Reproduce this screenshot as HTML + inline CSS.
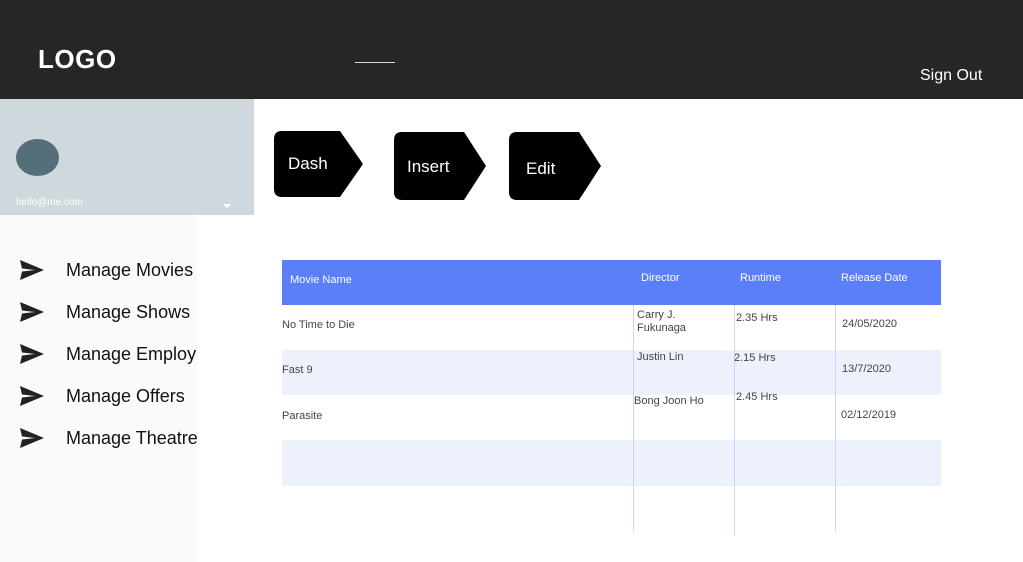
<!DOCTYPE html>
<html><head><meta charset="utf-8"><style>
*{margin:0;padding:0;box-sizing:border-box}
body{width:1023px;height:562px;position:relative;overflow:hidden;background:#fff;font-family:"Liberation Sans",sans-serif}
.a{position:absolute;white-space:nowrap}
.menu{font-size:18px;color:#111;left:66px}
.ic{left:20px;width:24px;height:20px}
.td{font-size:11px;color:#444}
.th{font-size:11px;color:#fff}
</style></head><body>
<div class="a" style="left:0;top:0;width:1023px;height:99px;background:#262626"></div>
<div class="a" style="left:38px;top:44px;font-size:26px;font-weight:bold;color:#fff;letter-spacing:0.5px">LOGO</div>
<div class="a" style="left:355px;top:62px;width:40px;height:1px;background:#ddd"></div>
<div class="a" style="left:920px;top:67px;font-size:16px;color:#fff">Sign Out</div>

<div class="a" style="left:0;top:99px;width:254px;height:116px;background:#cfd8dc"></div>
<div class="a" style="left:0;top:215px;width:197px;height:347px;background:#fafafa"></div>
<div class="a" style="left:16px;top:139px;width:43px;height:37px;border-radius:50%;background:#546e7a"></div>
<div class="a" style="left:16px;top:197px;font-size:10px;color:#fff">hello@me.com</div>
<div class="a" style="left:223px;top:204px;width:0;height:0;border-left:4px solid transparent;border-right:4px solid transparent;border-top:4px solid #fff"></div>

<svg class="a ic" style="top:260px" viewBox="0 0 24 20"><path d="M0 0L24 10L0 20L2 11.5L15 10L2 8.5Z" fill="#222"/></svg>
<div class="a menu" style="top:260px">Manage Movies</div>
<svg class="a ic" style="top:302px" viewBox="0 0 24 20"><path d="M0 0L24 10L0 20L2 11.5L15 10L2 8.5Z" fill="#222"/></svg>
<div class="a menu" style="top:302px">Manage Shows</div>
<svg class="a ic" style="top:344px" viewBox="0 0 24 20"><path d="M0 0L24 10L0 20L2 11.5L15 10L2 8.5Z" fill="#222"/></svg>
<div class="a menu" style="top:344px;width:131px;overflow:hidden">Manage Employees</div>
<svg class="a ic" style="top:386px" viewBox="0 0 24 20"><path d="M0 0L24 10L0 20L2 11.5L15 10L2 8.5Z" fill="#222"/></svg>
<div class="a menu" style="top:386px">Manage Offers</div>
<svg class="a ic" style="top:428px" viewBox="0 0 24 20"><path d="M0 0L24 10L0 20L2 11.5L15 10L2 8.5Z" fill="#222"/></svg>
<div class="a menu" style="top:428px;width:131px;overflow:hidden">Manage Theatres</div>

<svg class="a" style="left:274px;top:131px" width="90" height="67" viewBox="0 0 90 67"><path d="M8 0H66L89 33L66 66H8Q0 66 0 58V8Q0 0 8 0Z" fill="#000"/></svg>
<div class="a" style="left:288px;top:154px;font-size:17px;color:#fff">Dash</div>
<svg class="a" style="left:394px;top:132px" width="93" height="69" viewBox="0 0 93 69"><path d="M8 0H70L92 34L70 68H8Q0 68 0 60V8Q0 0 8 0Z" fill="#000"/></svg>
<div class="a" style="left:407px;top:157px;font-size:17px;color:#fff">Insert</div>
<svg class="a" style="left:509px;top:132px" width="93" height="69" viewBox="0 0 93 69"><path d="M8 0H70L92 34L70 68H8Q0 68 0 60V8Q0 0 8 0Z" fill="#000"/></svg>
<div class="a" style="left:526px;top:159px;font-size:17px;color:#fff">Edit</div>

<div class="a" style="left:282px;top:260px;width:659px;height:45px;background:#5a7ff9"></div>
<div class="a" style="left:282px;top:350px;width:659px;height:45px;background:#edf1fc"></div>
<div class="a" style="left:282px;top:440px;width:659px;height:46px;background:#edf1fc"></div>
<div class="a" style="left:633px;top:305px;width:1px;height:226px;background:#c9d6f2"></div>
<div class="a" style="left:734px;top:305px;width:1px;height:231px;background:#c9d6f2"></div>
<div class="a" style="left:835px;top:305px;width:1px;height:226px;background:#c9d6f2"></div>

<div class="a th" style="left:290px;top:274px">Movie Name</div>
<div class="a th" style="left:641px;top:272px">Director</div>
<div class="a th" style="left:740px;top:272px">Runtime</div>
<div class="a th" style="left:841px;top:272px">Release Date</div>

<div class="a td" style="left:282px;top:319px">No Time to Die</div>
<div class="a td" style="left:637px;top:309px;line-height:13px">Carry J.<br>Fukunaga</div>
<div class="a td" style="left:736px;top:312px">2.35 Hrs</div>
<div class="a td" style="left:842px;top:318px">24/05/2020</div>

<div class="a td" style="left:282px;top:364px">Fast 9</div>
<div class="a td" style="left:637px;top:351px">Justin Lin</div>
<div class="a td" style="left:734px;top:352px">2.15 Hrs</div>
<div class="a td" style="left:842px;top:363px">13/7/2020</div>

<div class="a td" style="left:282px;top:410px">Parasite</div>
<div class="a td" style="left:634px;top:395px">Bong Joon Ho</div>
<div class="a td" style="left:736px;top:391px">2.45 Hrs</div>
<div class="a td" style="left:841px;top:409px">02/12/2019</div>
</body></html>
